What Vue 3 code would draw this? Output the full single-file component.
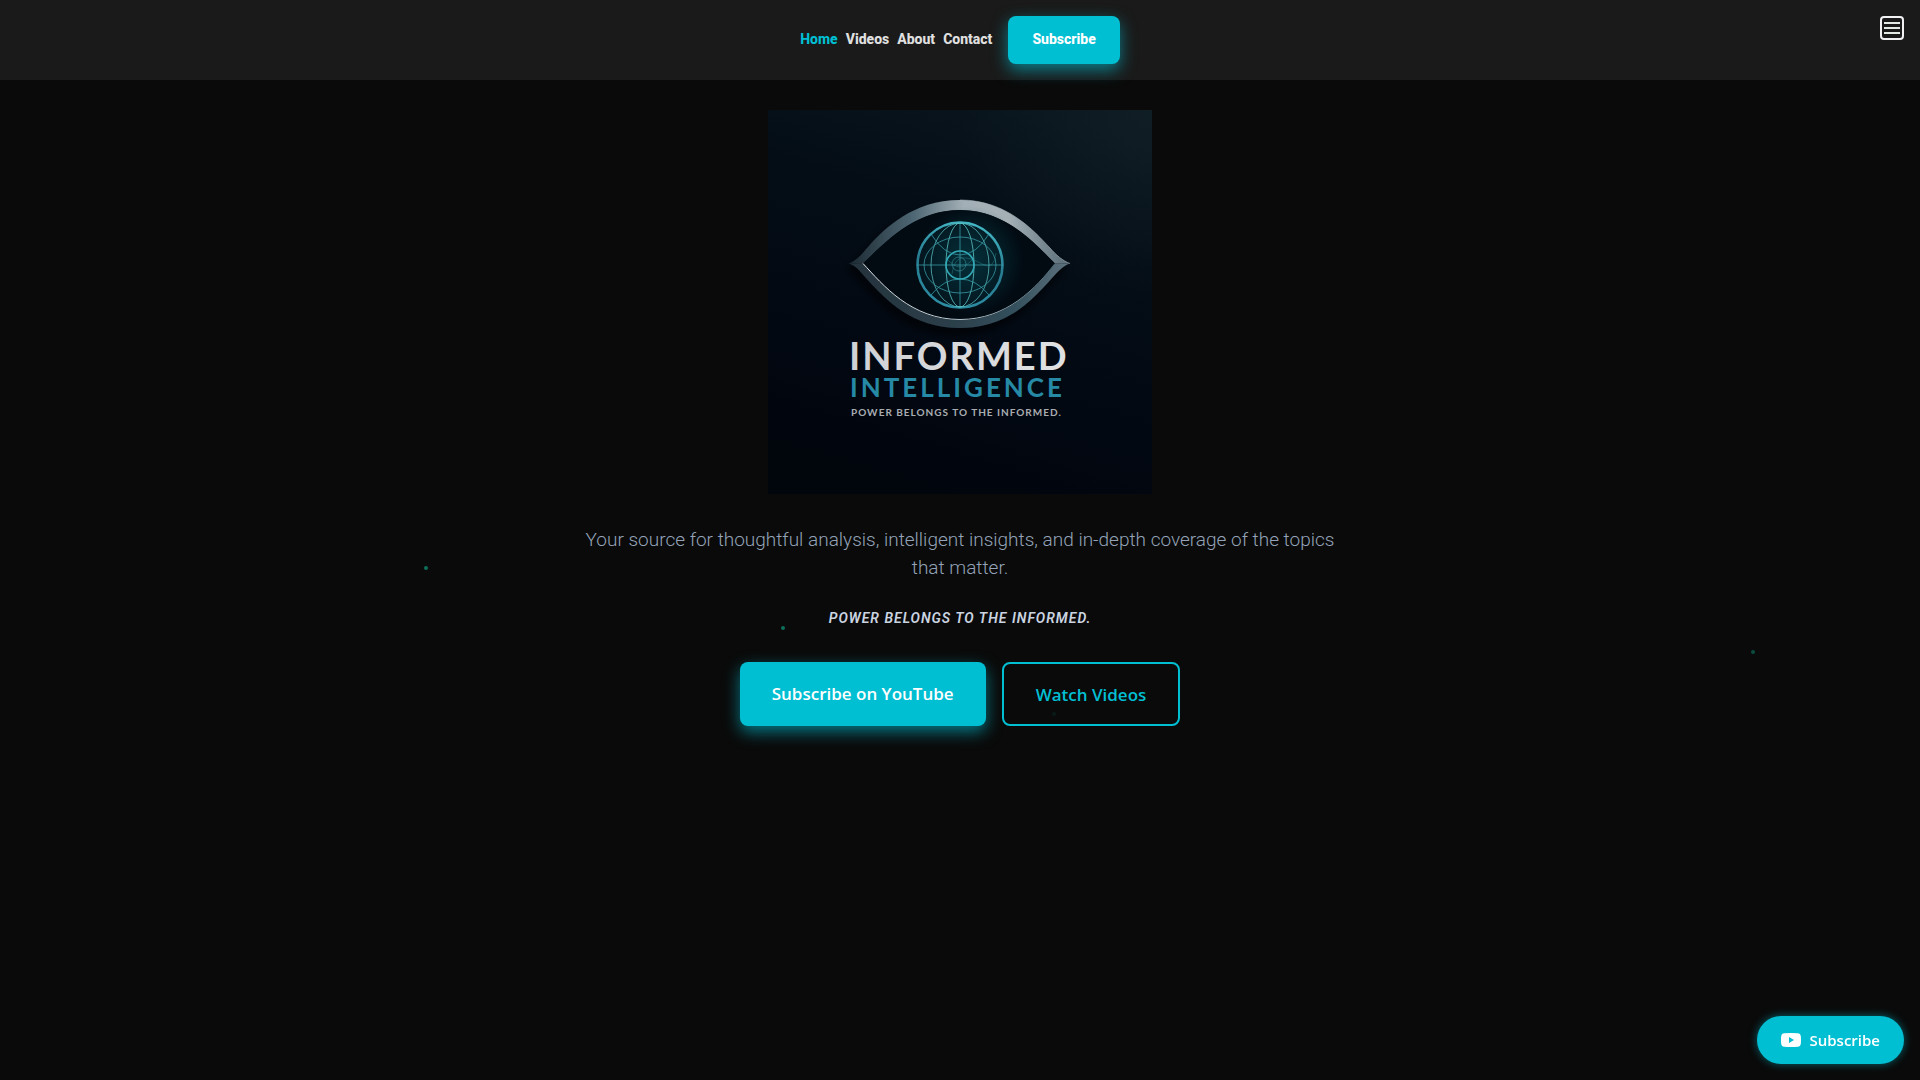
<template>
  <div class="page">
    <div class="particles" aria-hidden="true">
      <span
        v-for="p in particles"
        :key="p.id"
        class="particle"
        :style="{ left: p.x + '%', top: p.y + '%', opacity: p.opacity }"
      ></span>
    </div>

    <header class="navbar">
      <nav class="nav-links">
        <a
          v-for="link in links"
          :key="link.label"
          :href="link.href"
          class="nav-link"
          :class="{ active: link.label === current }"
          @click="current = link.label"
          >{{ link.label }}</a
        >
        <button type="button" class="nav-subscribe">Subscribe</button>
      </nav>
      <button type="button" class="menu-toggle" aria-label="Menu">
        <svg width="24" height="24" viewBox="0 0 24 24" fill="none">
          <rect x="1" y="1" width="22" height="22" rx="3" stroke="#f1f1f4" stroke-width="2" />
          <path d="M4 7h16M4 12h16M4 17h16" stroke="#e3eae6" stroke-width="2" />
        </svg>
      </button>
    </header>

    <main class="hero">
      <svg class="logo" viewBox="0 0 384 384" role="img" aria-label="Informed Intelligence">
        <defs>
          <linearGradient id="bg" x1="0.7" y1="0" x2="0.4" y2="1">
            <stop offset="0" stop-color="#09151c" />
            <stop offset="0.3" stop-color="#040d16" />
            <stop offset="0.7" stop-color="#020812" />
            <stop offset="1" stop-color="#01050c" />
          </linearGradient>
          <radialGradient id="corner" cx="1" cy="0" r="0.5">
            <stop offset="0" stop-color="#14232a" stop-opacity="0.6" />
            <stop offset="1" stop-color="#14232a" stop-opacity="0" />
          </radialGradient>
          <linearGradient id="lidTop" x1="81" y1="0" x2="302" y2="0" gradientUnits="userSpaceOnUse">
            <stop offset="0" stop-color="#1c2a33" />
            <stop offset="0.3" stop-color="#506975" />
            <stop offset="0.52" stop-color="#a3afb6" />
            <stop offset="0.72" stop-color="#a5b0b6" />
            <stop offset="1" stop-color="#566a75" />
          </linearGradient>
          <linearGradient id="lidBottom" x1="81" y1="0" x2="302" y2="0" gradientUnits="userSpaceOnUse">
            <stop offset="0" stop-color="#25333c" />
            <stop offset="0.45" stop-color="#2b3e49" />
            <stop offset="0.75" stop-color="#34505d" />
            <stop offset="1" stop-color="#5f737e" />
          </linearGradient>
          <linearGradient id="edge" x1="95" y1="0" x2="287" y2="0" gradientUnits="userSpaceOnUse">
            <stop offset="0" stop-color="#e8ecef" />
            <stop offset="0.6" stop-color="#a9bdc4" />
            <stop offset="1" stop-color="#4d6873" />
          </linearGradient>
          <linearGradient id="ring" x1="0.6" y1="0" x2="0.4" y2="1">
            <stop offset="0" stop-color="#43b6c4" />
            <stop offset="0.5" stop-color="#277b90" />
            <stop offset="1" stop-color="#2c8da3" />
          </linearGradient>
          <radialGradient id="iris" cx="0.6" cy="0.45" r="0.6">
            <stop offset="0" stop-color="#05303a" />
            <stop offset="1" stop-color="#03141d" />
          </radialGradient>
          <radialGradient id="glow">
            <stop offset="0.4" stop-color="#07434c" stop-opacity="0.5" />
            <stop offset="1" stop-color="#07434c" stop-opacity="0" />
          </radialGradient>
          <linearGradient id="silver" x1="0" y1="0" x2="1" y2="0">
            <stop offset="0" stop-color="#cfd1d4" />
            <stop offset="1" stop-color="#e0e1e3" />
          </linearGradient>
          <filter id="drop" x="-20%" y="-20%" width="140%" height="150%">
            <feDropShadow dx="-3" dy="6" stdDeviation="5" flood-color="#000" flood-opacity="0.8" />
          </filter>
        </defs>

        <rect width="384" height="384" fill="url(#bg)" />
        <rect width="384" height="384" fill="url(#corner)" />

        <!-- eye -->
        <g filter="url(#drop)">
          <path
            fill="url(#lidTop)"
            d="M81 153.5C88 151 94 144 100 137C116 119 145 90 192 90C239 90 266 121 282 138C288 145 295 151 302 153.5H287C268 135 239 100 192 100C145 100 115 135 95 153.5Z"
          />
          <path
            fill="url(#lidBottom)"
            d="M81 153.5C88 156 92 161 98 168C118 190 144 218 192 218C240 218 264 190 284 168C290 161 296 155 302 153.5H287C268 178 239 210 192 210C143 210 115 175 95 153.5Z"
          />
        </g>
        <path fill="#020a12" d="M95 153.5C115 135 145 100 192 100C239 100 268 135 287 153.5C268 178 239 210 192 210C143 210 115 175 95 153.5Z" />
        <path fill="none" stroke="url(#edge)" d="M95 153.5C115 175 143 209.5 192 209.5C239 209.5 268 178 287 153.5" />
        <path fill="none" stroke="#aab9bd" stroke-width="0.6" d="M192 90C239 90 266 121 282 138C288 145 295 151 302 153.5" />

        <!-- globe -->
        <circle cx="202" cy="150" r="54" fill="url(#glow)" />
        <circle cx="192" cy="155" r="42.5" fill="url(#iris)" stroke="url(#ring)" stroke-width="2.6" />
        <g fill="none" stroke="#3799a5" stroke-width="0.8">
          <path d="M192 112V198M149 155H235" />
          <ellipse cx="192" cy="155" rx="29" ry="42" stroke="#55b5b9" />
          <ellipse cx="192" cy="155" rx="14" ry="42" stroke="#5cc6c9" />
          <ellipse cx="192" cy="155" rx="36" ry="28" />
          <path d="M163 124Q176 145 192 145T221 124M163 185Q176 169 192 169T221 185" />
          <path d="M178 148Q186 157 192 157T206 148M184 164Q186 149 194 148T214 154T228 143" stroke-width="0.6" opacity="0.6" />
          <circle cx="192" cy="155" r="14" stroke="#32a9b6" stroke-width="1.6" />
          <circle cx="191" cy="154" r="7" opacity="0.7" />
        </g>

        <!-- wordmark -->
        <text x="81" y="260" class="word-main" fill="url(#silver)">INFORMED</text>
        <text x="82" y="287" class="word-sub">INTELLIGENCE</text>
        <text x="83" y="306" class="word-tag">POWER BELONGS TO THE INFORMED.</text>
      </svg>

      <p class="description">
        Your source for thoughtful analysis, intelligent insights, and in-depth coverage of the topics that matter.
      </p>
      <p class="tagline">POWER BELONGS TO THE INFORMED.</p>

      <div class="actions">
        <button type="button" class="btn btn-primary">Subscribe on YouTube</button>
        <button type="button" class="btn btn-outline">Watch Videos</button>
      </div>
    </main>

    <button type="button" class="floating-subscribe">
      <svg width="20" height="14" viewBox="0 0 20 14">
        <path
          fill="#fff"
          fill-rule="evenodd"
          d="M3 .2Q10-.2 17 .2Q19.600 .4 19.800 3Q20.200 7 19.800 11Q19.600 13.600 17 13.800Q10 14.200 3 13.800Q.4 13.600 .2 11Q-.2 7 .2 3Q.4 .4 3 .2ZM8 4V10L13 7Z"
        />
      </svg>
      Subscribe
    </button>
  </div>
</template>

<script setup>
import { ref } from "vue";

const current = ref("Home");

const links = [
  { label: "Home", href: "#home" },
  { label: "Videos", href: "#videos" },
  { label: "About", href: "#about" },
  { label: "Contact", href: "#contact" },
];

// positions are in percent of the window
const particles = [
  { id: 1, x: 22.1, y: 52.4, opacity: 0.6 },
  { id: 2, x: 40.7, y: 58, opacity: 0.6 },
  { id: 3, x: 91.2, y: 60.2, opacity: 0.4 },
  { id: 4, x: 54.8, y: 65.9, opacity: 0.1 },
];
</script>

<style>
body {
  background: #0a0a0a;
}
</style>

<style scoped>
.page {
  min-height: 100vh;
  background: #0a0a0a;
  color: #e0e0e0;
  font-family: Roboto, "Liberation Sans", sans-serif;
}
button {
  border: none;
  font-family: inherit;
  cursor: pointer;
}
.particles {
  position: fixed;
  inset: 0;
  pointer-events: none;
}
.particle {
  position: absolute;
  width: 4px;
  height: 4px;
  border-radius: 50%;
  background: #10b090;
}
.navbar {
  display: flex;
  justify-content: center;
  align-items: center;
  height: 80px;
  background: #1a1a1a;
}
.nav-links {
  display: flex;
  align-items: center;
  gap: 8px;
}
.nav-link,
.nav-subscribe {
  padding-bottom: 2px;
  font-size: 14px;
  font-weight: 800;
  line-height: 24px;
}
.nav-link {
  color: #e0e0e0;
  text-decoration: none;
}
.nav-link.active {
  color: #00bfd3;
}
.nav-subscribe {
  height: 48px;
  margin-left: 8px;
  padding: 0 24px 2px;
  border-radius: 8px;
  background: #00bfd3;
  color: #fff;
  box-shadow: 0 6px 16px rgba(0, 191, 211, 0.6);
}
.menu-toggle {
  position: absolute;
  top: 16px;
  right: 16px;
  display: flex;
  padding: 0;
  background: none;
}
.hero {
  display: flex;
  flex-direction: column;
  align-items: center;
  padding: 30px 16px;
  text-align: center;
}
.logo {
  width: 384px;
  max-width: 100%;
}
.word-main,
.word-sub,
.word-tag {
  font-family: Lato, sans-serif;
  font-weight: 700;
}
.word-main {
  font-size: 38px;
  letter-spacing: 2px;
}
.word-sub {
  fill: #2689a5;
  font-size: 26px;
  letter-spacing: 3px;
}
.word-tag {
  fill: #a9adb2;
  font-size: 10px;
  letter-spacing: 1px;
}
.description {
  max-width: 768px;
  margin: 32px 0 0;
  color: #94a3b8;
  font-size: 19px;
  font-weight: 300;
  line-height: 28px;
}
.tagline {
  margin: 24px 0 0;
  color: #cbd5e1;
  font-size: 14px;
  font-style: italic;
  font-weight: 600;
  line-height: 24px;
  letter-spacing: 1px;
}
.actions {
  display: flex;
  flex-wrap: wrap;
  justify-content: center;
  gap: 16px;
  margin-top: 32px;
}
.btn {
  height: 64px;
  padding: 0 32px;
  border-radius: 8px;
  font-family: "Open Sans", "Noto Sans", sans-serif;
  font-size: 17px;
  font-weight: 600;
}
.btn-primary {
  padding-bottom: 2px;
  background: #00bfd3;
  color: #fff;
  box-shadow: 0 6px 16px rgba(0, 191, 211, 0.6);
}
.btn-outline {
  border: 2px solid #00bfd3;
  background: transparent;
  color: #00bfd3;
}
.floating-subscribe {
  position: fixed;
  right: 16px;
  bottom: 16px;
  display: flex;
  align-items: center;
  gap: 8px;
  height: 48px;
  padding: 0 24px;
  border-radius: 24px;
  background: #00bfd3;
  color: #fff;
  font-family: "Open Sans", "Noto Sans", sans-serif;
  font-size: 15px;
  font-weight: 600;
  box-shadow: 0 0 8px rgba(0, 191, 211, 0.5);
}
</style>
